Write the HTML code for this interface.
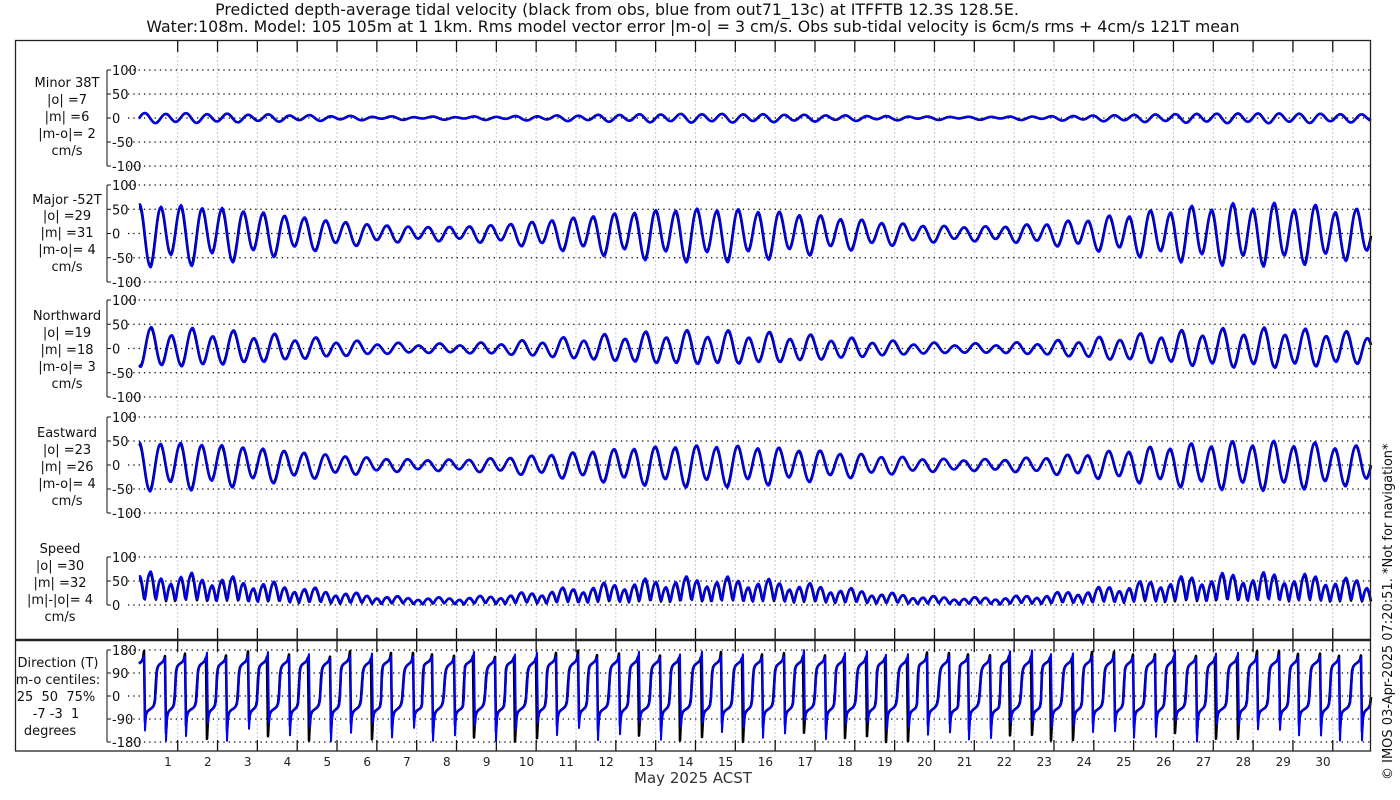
<!DOCTYPE html>
<html><head><meta charset="utf-8"><style>
html,body{margin:0;padding:0;background:#fff;}
svg{display:block;font-family:"DejaVu Sans","Liberation Sans",sans-serif;}
text{white-space:pre;}
</style></head><body>
<svg id="s" width="1400" height="800" viewBox="0 0 1400 800" xmlns="http://www.w3.org/2000/svg">
<text x="617" y="15" font-size="15.8" text-anchor="middle" fill="#111">Predicted depth-average tidal velocity (black from obs, blue from out71_13c) at ITFFTB 12.3S 128.5E.</text>
<text x="693" y="32" font-size="15.8" text-anchor="middle" fill="#111">Water:108m. Model: 105 105m at 1 1km. Rms model vector error |m-o| = 3 cm/s. Obs sub-tidal velocity is 6cm/s rms + 4cm/s 121T mean</text>
<g font-size="13" text-anchor="middle" fill="#111">
<text x="67" y="87">Minor 38T</text><text x="67" y="104">|o| =7</text><text x="67" y="121">|m| =6</text><text x="67" y="138">|m-o|= 2</text><text x="67" y="155">cm/s</text>
<text x="67" y="204">Major -52T</text><text x="67" y="220">|o| =29</text><text x="67" y="237">|m| =31</text><text x="67" y="254">|m-o|= 4</text><text x="67" y="271">cm/s</text>
<text x="67" y="320">Northward</text><text x="67" y="337">|o| =19</text><text x="67" y="354">|m| =18</text><text x="67" y="371">|m-o|= 3</text><text x="67" y="388">cm/s</text>
<text x="67" y="437">Eastward</text><text x="67" y="454">|o| =23</text><text x="67" y="471">|m| =26</text><text x="67" y="488">|m-o|= 4</text><text x="67" y="505">cm/s</text>
<text x="60" y="553">Speed</text><text x="60" y="570">|o| =30</text><text x="60" y="587">|m| =32</text><text x="60" y="604">|m|-|o|= 4</text><text x="60" y="621">cm/s</text>
<text x="58" y="667">Direction (T)</text><text x="58" y="684">m-o centiles:</text><text x="56" y="701">25  50  75%</text><text x="56" y="718">-7 -3  1</text><text x="50" y="735">degrees</text>
</g>
<text x="693" y="783" font-size="15" text-anchor="middle" fill="#333">May 2025 ACST</text>
<text transform="translate(1392,780) rotate(-90)" font-size="13" fill="#111">© IMOS 03-Apr-2025 07:20:51. *Not for navigation*</text>
<g id="g"></g>
</svg>
<script>
var g=document.getElementById('g'),out='';
var X0=139,X1=1371,S=39.83;
function ln(x1,y1,x2,y2,st){out+='<line x1="'+x1+'" y1="'+y1+'" x2="'+x2+'" y2="'+y2+'" '+st+'/>';}
function tx(x,y,t,st){out+='<text x="'+x+'" y="'+y+'" '+(st||'')+'>'+t+'</text>';}
for(var d=0;d<30;d++){var x=177.7+d*S;
 ln(x,52,x,628,'stroke="#c8c8ea" stroke-width="1" stroke-dasharray="2,2"');
 ln(x,652,x,740,'stroke="#c8c8ea" stroke-width="1" stroke-dasharray="2,2"');
 ln(x,40,x,52,'stroke="#111" stroke-width="1.3"');ln(x,628,x,652,'stroke="#111" stroke-width="1.3"');ln(x,740,x,751,'stroke="#111" stroke-width="1.3"');
 tx(168+d*S,766,d+1,'font-size="12" text-anchor="middle" fill="#222"');}
var P=[{top:70,bot:166,v:[100,50,0,-50,-100]},{top:185,bot:282,v:[100,50,0,-50,-100]},{top:300,bot:397,v:[100,50,0,-50,-100]},{top:417,bot:513,v:[100,50,0,-50,-100]},{top:557,bot:605,v:[100,50,0]},{top:650,bot:742,v:[180,90,0,-90,-180]}];
P.forEach(function(p){var n=p.v.length;ln(107,p.top,107,p.bot,'stroke="#111"');
 p.v.forEach(function(v,i){var y=p.top+(p.bot-p.top)*i/(n-1);ln(107,y,111,y,'stroke="#111"');
 tx(112,y+5,v,'font-size="13" fill="#111"');
 ln(128,y,X1,y,'stroke="#000" stroke-width="1.2" stroke-dasharray="1.3,4"');});});
function sig(t,ph,am){var A=34+20*Math.cos(2*Math.PI*(t-0.3)/13.9)+4*Math.cos(2*Math.PI*(t-28)/28);A*=am;
 var w=2*Math.PI*1.932*t;var d=2*Math.PI*0.97*t;
 var maj=A*Math.cos(w+ph-0.35)+0.22*A*Math.cos(d+ph+1.2);
 var min=0.17*A*Math.sin(w+ph-0.35)+1.5*Math.cos(d);
 return [maj,min];}
function build(ph,am){var r={maj:[],min:[],n:[],e:[],sp:[],dir:[]},a=-52*Math.PI/180;
 for(var x=X0;x<=X1;x+=1){var t=(x-X0)/S,m=sig(t,ph,am);
 var e=m[0]*Math.sin(a)+m[1]*Math.cos(a),n=m[0]*Math.cos(a)-m[1]*Math.sin(a);
 r.maj.push(m[0]);r.min.push(m[1]);r.n.push(-n);r.e.push(-e);r.sp.push(Math.hypot(m[0],m[1]));
 r.dir.push(Math.atan2(-e,-n)*180/Math.PI);}return r;}
function path(arr,top,bot,vmax,vmin,col,wd){var s='';for(var i=0;i<arr.length;i++){var v=Math.max(vmin,Math.min(vmax,arr[i]));var y=top+(vmax-v)/(vmax-vmin)*(bot-top);s+=(i?'L':'M')+(X0+i)+' '+y.toFixed(1);}
 out+='<path d="'+s+'" fill="none" stroke="'+col+'" stroke-width="'+wd+'" stroke-linejoin="round"/>';}
var O=build(0.12,0.95),M=build(0,1.0);
[[O,'#000',2.6],[M,'#0000ff',2]].forEach(function(q){var r=q[0];
 path(r.min,70,166,100,-100,q[1],q[2]);path(r.maj,185,282,100,-100,q[1],q[2]);
 path(r.n,300,397,100,-100,q[1],q[2]);path(r.e,417,513,100,-100,q[1],q[2]);
 path(r.sp,557,605,100,0,q[1],q[2]);path(r.dir,650,742,180,-180,q[1],q[2]);});
out+='<rect x="15.5" y="40.5" width="1355" height="710.5" fill="none" stroke="#222" stroke-width="1.3"/>';
ln(15,640,1371,640,'stroke="#222" stroke-width="2.5"');
g.innerHTML=out;
</script>
</body></html>
